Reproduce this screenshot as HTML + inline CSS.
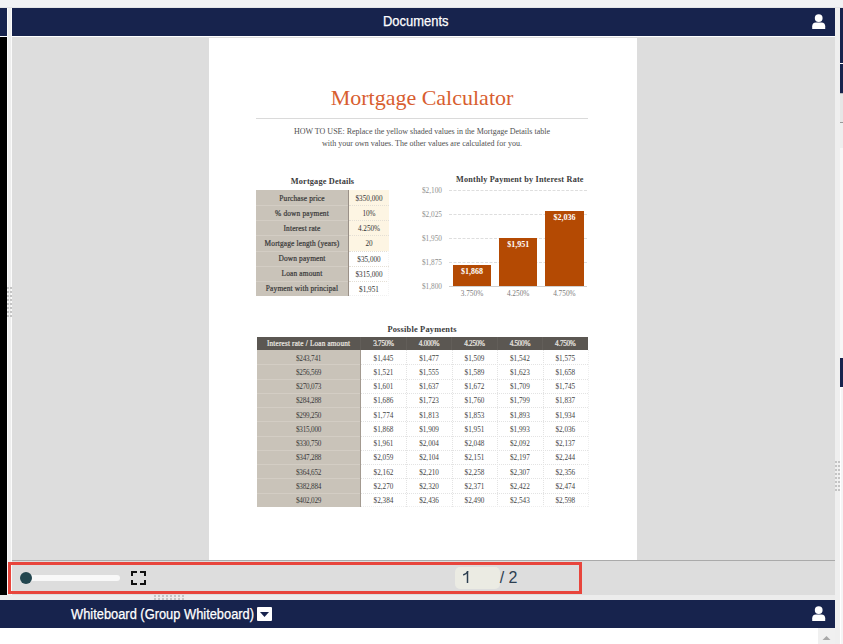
<!DOCTYPE html>
<html><head><meta charset="utf-8">
<style>
*{margin:0;padding:0;box-sizing:border-box}
html,body{width:843px;height:644px;overflow:hidden;background:#fff;font-family:"Liberation Sans",sans-serif}
.a{position:absolute}
.navy{background:#17234d}
.s{font-family:"Liberation Serif",serif;position:absolute;white-space:nowrap}
.c{text-align:center}
.r{text-align:right}
.b{font-weight:bold}
.m{-webkit-text-stroke:0.22px currentColor}
</style></head><body>

<div class="a" style="left:0;top:0;width:843px;height:8px;background:#f1f2f4"></div>
<div class="a" style="left:0;top:7px;width:843px;height:1px;background:#e4e5e7"></div>
<div class="a navy" style="left:0;top:8px;width:7px;height:28px"></div>
<div class="a" style="left:0;top:36px;width:7px;height:1px;background:#fff"></div>
<div class="a" style="left:0;top:37px;width:7px;height:558px;background:#000"></div>
<div class="a" style="left:7px;top:8px;width:5px;height:587px;background:#eeeeee;border-left:1px solid #fbfbfb;border-right:1px solid #fbfbfb"></div>
<svg class="a" style="left:7px;top:287px" width="5" height="32"><rect x="0" y="0" width="2" height="2" fill="#c4c4c4"/><rect x="3" y="0" width="2" height="2" fill="#c4c4c4"/><rect x="0" y="4" width="2" height="2" fill="#c4c4c4"/><rect x="3" y="4" width="2" height="2" fill="#c4c4c4"/><rect x="0" y="8" width="2" height="2" fill="#c4c4c4"/><rect x="3" y="8" width="2" height="2" fill="#c4c4c4"/><rect x="0" y="12" width="2" height="2" fill="#c4c4c4"/><rect x="3" y="12" width="2" height="2" fill="#c4c4c4"/><rect x="0" y="16" width="2" height="2" fill="#c4c4c4"/><rect x="3" y="16" width="2" height="2" fill="#c4c4c4"/><rect x="0" y="20" width="2" height="2" fill="#c4c4c4"/><rect x="3" y="20" width="2" height="2" fill="#c4c4c4"/><rect x="0" y="24" width="2" height="2" fill="#c4c4c4"/><rect x="3" y="24" width="2" height="2" fill="#c4c4c4"/><rect x="0" y="28" width="2" height="2" fill="#c4c4c4"/><rect x="3" y="28" width="2" height="2" fill="#c4c4c4"/></svg>
<div class="a" style="left:835px;top:8px;width:5px;height:636px;background:#efefef"></div>
<div class="a navy" style="left:840px;top:8px;width:3px;height:55px"></div>
<div class="a" style="left:840px;top:63px;width:3px;height:1px;background:#fff"></div>
<div class="a navy" style="left:840px;top:64px;width:3px;height:29px"></div>
<div class="a" style="left:840px;top:93px;width:3px;height:29px;background:#e6e6e6;border-top:1px solid #bbb"></div>
<div class="a" style="left:840px;top:122px;width:3px;height:26px;background:#eee;border-top:1px solid #999"></div>
<div class="a" style="left:840px;top:148px;width:3px;height:210px;background:#f7f7f7"></div>
<div class="a" style="left:840px;top:387px;width:3px;height:257px;background:#f5f5f5;border-left:1px solid #fff;border-top:1px solid #fff"></div>
<div class="a navy" style="left:840px;top:358px;width:3px;height:29px"></div>
<svg class="a" style="left:835px;top:461px" width="5" height="32"><rect x="0" y="0" width="2" height="2" fill="#c4c4c4"/><rect x="3" y="0" width="2" height="2" fill="#c4c4c4"/><rect x="0" y="4" width="2" height="2" fill="#c4c4c4"/><rect x="3" y="4" width="2" height="2" fill="#c4c4c4"/><rect x="0" y="8" width="2" height="2" fill="#c4c4c4"/><rect x="3" y="8" width="2" height="2" fill="#c4c4c4"/><rect x="0" y="12" width="2" height="2" fill="#c4c4c4"/><rect x="3" y="12" width="2" height="2" fill="#c4c4c4"/><rect x="0" y="16" width="2" height="2" fill="#c4c4c4"/><rect x="3" y="16" width="2" height="2" fill="#c4c4c4"/><rect x="0" y="20" width="2" height="2" fill="#c4c4c4"/><rect x="3" y="20" width="2" height="2" fill="#c4c4c4"/><rect x="0" y="24" width="2" height="2" fill="#c4c4c4"/><rect x="3" y="24" width="2" height="2" fill="#c4c4c4"/><rect x="0" y="28" width="2" height="2" fill="#c4c4c4"/><rect x="3" y="28" width="2" height="2" fill="#c4c4c4"/></svg>
<div class="a navy" style="left:12px;top:8px;width:823px;height:28px"></div>
<div class="a" style="left:383px;top:7px;height:28px;color:#fff;font-size:14px;line-height:28px;transform:scaleX(0.925);transform-origin:0 0;-webkit-text-stroke:0.25px #fff">Documents</div>
<div class="a" style="left:12px;top:36px;width:823px;height:1px;background:#fff"></div>
<svg class="a" style="left:810px;top:12px" width="18" height="20" viewBox="0 0 18 20">
<circle cx="8.7" cy="6.1" r="3.9" fill="#fff"/>
<path d="M2.2 17 V14.2 Q2.2 10.4 6 10.4 H11.4 Q15.2 10.4 15.2 14.2 V17 Z" fill="#fff"/></svg>
<div class="a" style="left:12px;top:37px;width:823px;height:523px;background:#dddddd"></div>
<div class="a" style="left:12px;top:560px;width:823px;height:1px;background:#aaaaaa"></div>
<div class="a" style="left:209px;top:38px;width:428px;height:522px;background:#fff"></div>
<div class="s c" style="left:256px;top:83px;width:332px;height:30px;line-height:30px;font-size:22px;color:#d85e30">Mortgage Calculator</div>
<div class="a" style="left:256px;top:118px;width:332px;height:1px;background:#dadada"></div>
<div class="s c" style="left:256px;top:126px;width:332px;line-height:11.5px;font-size:8px;color:#505050">HOW TO USE: Replace the yellow shaded values in the Mortgage Details table<br>with your own values. The other values are calculated for you.</div>
<div class="s c b" style="left:256px;top:176px;width:133px;line-height:12px;font-size:8.3px;letter-spacing:0.15px;color:#3c3c3c">Mortgage Details</div>
<div class="a" style="left:256px;top:190px;width:92px;height:106px;background:#c9c3b9"></div>
<div class="a" style="left:348px;top:190px;width:1px;height:106px;background:#9a9087"></div>
<div class="a" style="left:349px;top:190px;width:40px;height:60.57px;background:#fdf5e3"></div>
<div class="s c m" style="left:256px;top:190.50px;width:92px;height:15.14px;line-height:15.14px;font-size:7.4px;letter-spacing:0.15px;color:#3a3a3a">Purchase price</div>
<div class="s c" style="left:349px;top:192.00px;width:40px;height:15.14px;line-height:15.14px;font-size:7.2px;color:#333">$350,000</div>
<div class="a" style="left:256px;top:205.14px;width:92px;height:1px;background:#d3cdc4"></div>
<div class="a" style="left:349px;top:205.14px;width:40px;height:0;border-top:1px dotted #e4dfd5"></div>
<div class="s c m" style="left:256px;top:205.64px;width:92px;height:15.14px;line-height:15.14px;font-size:7.4px;letter-spacing:0.15px;color:#3a3a3a">% down payment</div>
<div class="s c" style="left:349px;top:207.14px;width:40px;height:15.14px;line-height:15.14px;font-size:7.2px;color:#333">10%</div>
<div class="a" style="left:256px;top:220.29px;width:92px;height:1px;background:#d3cdc4"></div>
<div class="a" style="left:349px;top:220.29px;width:40px;height:0;border-top:1px dotted #e4dfd5"></div>
<div class="s c m" style="left:256px;top:220.79px;width:92px;height:15.14px;line-height:15.14px;font-size:7.4px;letter-spacing:0.15px;color:#3a3a3a">Interest rate</div>
<div class="s c" style="left:349px;top:222.29px;width:40px;height:15.14px;line-height:15.14px;font-size:7.2px;color:#333">4.250%</div>
<div class="a" style="left:256px;top:235.43px;width:92px;height:1px;background:#d3cdc4"></div>
<div class="a" style="left:349px;top:235.43px;width:40px;height:0;border-top:1px dotted #e4dfd5"></div>
<div class="s c m" style="left:256px;top:235.93px;width:92px;height:15.14px;line-height:15.14px;font-size:7.4px;letter-spacing:0.15px;color:#3a3a3a">Mortgage length (years)</div>
<div class="s c" style="left:349px;top:237.43px;width:40px;height:15.14px;line-height:15.14px;font-size:7.2px;color:#333">20</div>
<div class="a" style="left:256px;top:250.57px;width:92px;height:1px;background:#d3cdc4"></div>
<div class="a" style="left:349px;top:250.57px;width:40px;height:0;border-top:1px dotted #e4dfd5"></div>
<div class="s c m" style="left:256px;top:251.07px;width:92px;height:15.14px;line-height:15.14px;font-size:7.4px;letter-spacing:0.15px;color:#3a3a3a">Down payment</div>
<div class="s c" style="left:349px;top:252.57px;width:40px;height:15.14px;line-height:15.14px;font-size:7.2px;color:#333">$35,000</div>
<div class="a" style="left:256px;top:265.71px;width:92px;height:1px;background:#d3cdc4"></div>
<div class="a" style="left:349px;top:265.71px;width:40px;height:0;border-top:1px dotted #e4dfd5"></div>
<div class="s c m" style="left:256px;top:266.21px;width:92px;height:15.14px;line-height:15.14px;font-size:7.4px;letter-spacing:0.15px;color:#3a3a3a">Loan amount</div>
<div class="s c" style="left:349px;top:267.71px;width:40px;height:15.14px;line-height:15.14px;font-size:7.2px;color:#333">$315,000</div>
<div class="a" style="left:256px;top:280.86px;width:92px;height:1px;background:#d3cdc4"></div>
<div class="a" style="left:349px;top:280.86px;width:40px;height:0;border-top:1px dotted #e4dfd5"></div>
<div class="s c m" style="left:256px;top:281.36px;width:92px;height:15.14px;line-height:15.14px;font-size:7.4px;letter-spacing:0.15px;color:#3a3a3a">Payment with principal</div>
<div class="s c" style="left:349px;top:282.86px;width:40px;height:15.14px;line-height:15.14px;font-size:7.2px;color:#333">$1,951</div>
<div class="a" style="left:349px;top:250.57px;width:40px;height:45.43px;border-right:1px dotted #f4f4f4;border-bottom:1px dotted #f0f0f0"></div>
<div class="s b" style="left:456px;top:173.5px;line-height:12px;font-size:8.2px;letter-spacing:0.2px;color:#3c3c3c">Monthly Payment by Interest Rate</div>
<div class="s r" style="left:402px;top:185.0px;width:40px;line-height:12px;font-size:7.3px;color:#8f8f8f">$2,100</div>
<svg class="a" style="left:449px;top:190px" width="138" height="1"><line x1="0" y1="0.5" x2="138" y2="0.5" stroke="#dedede" stroke-width="1" stroke-dasharray="3 1.5"/></svg>
<div class="s r" style="left:402px;top:209.0px;width:40px;line-height:12px;font-size:7.3px;color:#8f8f8f">$2,025</div>
<svg class="a" style="left:449px;top:214px" width="138" height="1"><line x1="0" y1="0.5" x2="138" y2="0.5" stroke="#dedede" stroke-width="1" stroke-dasharray="3 1.5"/></svg>
<div class="s r" style="left:402px;top:233.0px;width:40px;line-height:12px;font-size:7.3px;color:#8f8f8f">$1,950</div>
<svg class="a" style="left:449px;top:238px" width="138" height="1"><line x1="0" y1="0.5" x2="138" y2="0.5" stroke="#dedede" stroke-width="1" stroke-dasharray="3 1.5"/></svg>
<div class="s r" style="left:402px;top:257.0px;width:40px;line-height:12px;font-size:7.3px;color:#8f8f8f">$1,875</div>
<svg class="a" style="left:449px;top:262px" width="138" height="1"><line x1="0" y1="0.5" x2="138" y2="0.5" stroke="#dedede" stroke-width="1" stroke-dasharray="3 1.5"/></svg>
<div class="s r" style="left:402px;top:281.0px;width:40px;line-height:12px;font-size:7.3px;color:#8f8f8f">$1,800</div>
<div class="a" style="left:449px;top:286px;width:138px;height:1px;background:#d0d0d0"></div>
<div class="a" style="left:453px;top:265.4px;width:38px;height:21.0px;background:#b44a03"></div>
<div class="s c b" style="left:453px;top:266.1px;width:38px;line-height:12px;font-size:8px;color:#fff">$1,868</div>
<div class="s c" style="left:448px;top:288px;width:48px;line-height:12px;font-size:7.3px;color:#7c7c7c">3.750%</div>
<div class="a" style="left:499px;top:238.2px;width:38.3px;height:48.2px;background:#b44a03"></div>
<div class="s c b" style="left:499px;top:238.9px;width:38.3px;line-height:12px;font-size:8px;color:#fff">$1,951</div>
<div class="s c" style="left:494px;top:288px;width:48.3px;line-height:12px;font-size:7.3px;color:#7c7c7c">4.250%</div>
<div class="a" style="left:545px;top:211.0px;width:38.8px;height:75.4px;background:#b44a03"></div>
<div class="s c b" style="left:545px;top:211.7px;width:38.8px;line-height:12px;font-size:8px;color:#fff">$2,036</div>
<div class="s c" style="left:540px;top:288px;width:48.8px;line-height:12px;font-size:7.3px;color:#7c7c7c">4.750%</div>
<div class="s c b" style="left:256px;top:324px;width:332px;line-height:12px;font-size:8.4px;letter-spacing:0.2px;color:#3c3c3c">Possible Payments</div>
<div class="a" style="left:256.5px;top:337px;width:331.5px;height:13px;background:#5b5752"></div>
<div class="s c m" style="left:256.5px;top:337.5px;width:104.2px;height:13px;line-height:13px;font-size:7.2px;letter-spacing:0.2px;color:#ebe8e2">Interest rate / Loan amount</div>
<div class="s c m" style="left:360.7px;top:337.5px;width:45.6px;height:13px;line-height:13px;font-size:7.2px;letter-spacing:-0.3px;color:#ebe8e2">3.750%</div>
<div class="a" style="left:360.2px;top:337px;width:1px;height:13px;background:#625e59"></div>
<div class="s c m" style="left:406.3px;top:337.5px;width:45.5px;height:13px;line-height:13px;font-size:7.2px;letter-spacing:-0.3px;color:#ebe8e2">4.000%</div>
<div class="a" style="left:405.8px;top:337px;width:1px;height:13px;background:#625e59"></div>
<div class="s c m" style="left:451.8px;top:337.5px;width:45.4px;height:13px;line-height:13px;font-size:7.2px;letter-spacing:-0.3px;color:#ebe8e2">4.250%</div>
<div class="a" style="left:451.3px;top:337px;width:1px;height:13px;background:#625e59"></div>
<div class="s c m" style="left:497.2px;top:337.5px;width:45.4px;height:13px;line-height:13px;font-size:7.2px;letter-spacing:-0.3px;color:#ebe8e2">4.500%</div>
<div class="a" style="left:496.7px;top:337px;width:1px;height:13px;background:#625e59"></div>
<div class="s c m" style="left:542.6px;top:337.5px;width:45.4px;height:13px;line-height:13px;font-size:7.2px;letter-spacing:-0.3px;color:#ebe8e2">4.750%</div>
<div class="a" style="left:542.1px;top:337px;width:1px;height:13px;background:#625e59"></div>
<div class="a" style="left:256.5px;top:350px;width:103.5px;height:157px;background:#c9c3b9"></div>
<div class="a" style="left:360px;top:350px;width:1px;height:157px;background:#a39a90"></div>
<div class="a" style="left:406.3px;top:350px;width:0;height:157px;border-left:1px dotted #e3e3e3"></div>
<div class="a" style="left:451.8px;top:350px;width:0;height:157px;border-left:1px dotted #e3e3e3"></div>
<div class="a" style="left:497.2px;top:350px;width:0;height:157px;border-left:1px dotted #e3e3e3"></div>
<div class="a" style="left:542.6px;top:350px;width:0;height:157px;border-left:1px dotted #e3e3e3"></div>
<div class="a" style="left:587.5px;top:350px;width:0;height:157px;border-left:1px dotted #eee"></div>
<div class="s c" style="left:256.5px;top:351.50px;width:104.2px;height:14.27px;line-height:14.27px;font-size:7.2px;color:#3a3a3a;letter-spacing:-0.2px">$243,741</div>
<div class="s c" style="left:360.7px;top:351.50px;width:45.6px;height:14.27px;line-height:14.27px;font-size:7.2px;color:#444">$1,445</div>
<div class="s c" style="left:406.3px;top:351.50px;width:45.5px;height:14.27px;line-height:14.27px;font-size:7.2px;color:#444">$1,477</div>
<div class="s c" style="left:451.8px;top:351.50px;width:45.4px;height:14.27px;line-height:14.27px;font-size:7.2px;color:#444">$1,509</div>
<div class="s c" style="left:497.2px;top:351.50px;width:45.4px;height:14.27px;line-height:14.27px;font-size:7.2px;color:#444">$1,542</div>
<div class="s c" style="left:542.6px;top:351.50px;width:45.4px;height:14.27px;line-height:14.27px;font-size:7.2px;color:#444">$1,575</div>
<div class="a" style="left:256.5px;top:364.27px;width:103.5px;height:1px;background:#d3cdc4"></div>
<div class="a" style="left:361px;top:364.27px;width:227px;height:0;border-top:1px dotted #e3e3e3"></div>
<div class="s c" style="left:256.5px;top:365.77px;width:104.2px;height:14.27px;line-height:14.27px;font-size:7.2px;color:#3a3a3a;letter-spacing:-0.2px">$256,569</div>
<div class="s c" style="left:360.7px;top:365.77px;width:45.6px;height:14.27px;line-height:14.27px;font-size:7.2px;color:#444">$1,521</div>
<div class="s c" style="left:406.3px;top:365.77px;width:45.5px;height:14.27px;line-height:14.27px;font-size:7.2px;color:#444">$1,555</div>
<div class="s c" style="left:451.8px;top:365.77px;width:45.4px;height:14.27px;line-height:14.27px;font-size:7.2px;color:#444">$1,589</div>
<div class="s c" style="left:497.2px;top:365.77px;width:45.4px;height:14.27px;line-height:14.27px;font-size:7.2px;color:#444">$1,623</div>
<div class="s c" style="left:542.6px;top:365.77px;width:45.4px;height:14.27px;line-height:14.27px;font-size:7.2px;color:#444">$1,658</div>
<div class="a" style="left:256.5px;top:378.55px;width:103.5px;height:1px;background:#d3cdc4"></div>
<div class="a" style="left:361px;top:378.55px;width:227px;height:0;border-top:1px dotted #e3e3e3"></div>
<div class="s c" style="left:256.5px;top:380.05px;width:104.2px;height:14.27px;line-height:14.27px;font-size:7.2px;color:#3a3a3a;letter-spacing:-0.2px">$270,073</div>
<div class="s c" style="left:360.7px;top:380.05px;width:45.6px;height:14.27px;line-height:14.27px;font-size:7.2px;color:#444">$1,601</div>
<div class="s c" style="left:406.3px;top:380.05px;width:45.5px;height:14.27px;line-height:14.27px;font-size:7.2px;color:#444">$1,637</div>
<div class="s c" style="left:451.8px;top:380.05px;width:45.4px;height:14.27px;line-height:14.27px;font-size:7.2px;color:#444">$1,672</div>
<div class="s c" style="left:497.2px;top:380.05px;width:45.4px;height:14.27px;line-height:14.27px;font-size:7.2px;color:#444">$1,709</div>
<div class="s c" style="left:542.6px;top:380.05px;width:45.4px;height:14.27px;line-height:14.27px;font-size:7.2px;color:#444">$1,745</div>
<div class="a" style="left:256.5px;top:392.82px;width:103.5px;height:1px;background:#d3cdc4"></div>
<div class="a" style="left:361px;top:392.82px;width:227px;height:0;border-top:1px dotted #e3e3e3"></div>
<div class="s c" style="left:256.5px;top:394.32px;width:104.2px;height:14.27px;line-height:14.27px;font-size:7.2px;color:#3a3a3a;letter-spacing:-0.2px">$284,288</div>
<div class="s c" style="left:360.7px;top:394.32px;width:45.6px;height:14.27px;line-height:14.27px;font-size:7.2px;color:#444">$1,686</div>
<div class="s c" style="left:406.3px;top:394.32px;width:45.5px;height:14.27px;line-height:14.27px;font-size:7.2px;color:#444">$1,723</div>
<div class="s c" style="left:451.8px;top:394.32px;width:45.4px;height:14.27px;line-height:14.27px;font-size:7.2px;color:#444">$1,760</div>
<div class="s c" style="left:497.2px;top:394.32px;width:45.4px;height:14.27px;line-height:14.27px;font-size:7.2px;color:#444">$1,799</div>
<div class="s c" style="left:542.6px;top:394.32px;width:45.4px;height:14.27px;line-height:14.27px;font-size:7.2px;color:#444">$1,837</div>
<div class="a" style="left:256.5px;top:407.09px;width:103.5px;height:1px;background:#d3cdc4"></div>
<div class="a" style="left:361px;top:407.09px;width:227px;height:0;border-top:1px dotted #e3e3e3"></div>
<div class="s c" style="left:256.5px;top:408.59px;width:104.2px;height:14.27px;line-height:14.27px;font-size:7.2px;color:#3a3a3a;letter-spacing:-0.2px">$299,250</div>
<div class="s c" style="left:360.7px;top:408.59px;width:45.6px;height:14.27px;line-height:14.27px;font-size:7.2px;color:#444">$1,774</div>
<div class="s c" style="left:406.3px;top:408.59px;width:45.5px;height:14.27px;line-height:14.27px;font-size:7.2px;color:#444">$1,813</div>
<div class="s c" style="left:451.8px;top:408.59px;width:45.4px;height:14.27px;line-height:14.27px;font-size:7.2px;color:#444">$1,853</div>
<div class="s c" style="left:497.2px;top:408.59px;width:45.4px;height:14.27px;line-height:14.27px;font-size:7.2px;color:#444">$1,893</div>
<div class="s c" style="left:542.6px;top:408.59px;width:45.4px;height:14.27px;line-height:14.27px;font-size:7.2px;color:#444">$1,934</div>
<div class="a" style="left:256.5px;top:421.36px;width:103.5px;height:1px;background:#d3cdc4"></div>
<div class="a" style="left:361px;top:421.36px;width:227px;height:0;border-top:1px dotted #e3e3e3"></div>
<div class="s c" style="left:256.5px;top:422.86px;width:104.2px;height:14.27px;line-height:14.27px;font-size:7.2px;color:#3a3a3a;letter-spacing:-0.2px">$315,000</div>
<div class="s c" style="left:360.7px;top:422.86px;width:45.6px;height:14.27px;line-height:14.27px;font-size:7.2px;color:#444">$1,868</div>
<div class="s c" style="left:406.3px;top:422.86px;width:45.5px;height:14.27px;line-height:14.27px;font-size:7.2px;color:#444">$1,909</div>
<div class="s c" style="left:451.8px;top:422.86px;width:45.4px;height:14.27px;line-height:14.27px;font-size:7.2px;color:#444">$1,951</div>
<div class="s c" style="left:497.2px;top:422.86px;width:45.4px;height:14.27px;line-height:14.27px;font-size:7.2px;color:#444">$1,993</div>
<div class="s c" style="left:542.6px;top:422.86px;width:45.4px;height:14.27px;line-height:14.27px;font-size:7.2px;color:#444">$2,036</div>
<div class="a" style="left:256.5px;top:435.64px;width:103.5px;height:1px;background:#d3cdc4"></div>
<div class="a" style="left:361px;top:435.64px;width:227px;height:0;border-top:1px dotted #e3e3e3"></div>
<div class="s c" style="left:256.5px;top:437.14px;width:104.2px;height:14.27px;line-height:14.27px;font-size:7.2px;color:#3a3a3a;letter-spacing:-0.2px">$330,750</div>
<div class="s c" style="left:360.7px;top:437.14px;width:45.6px;height:14.27px;line-height:14.27px;font-size:7.2px;color:#444">$1,961</div>
<div class="s c" style="left:406.3px;top:437.14px;width:45.5px;height:14.27px;line-height:14.27px;font-size:7.2px;color:#444">$2,004</div>
<div class="s c" style="left:451.8px;top:437.14px;width:45.4px;height:14.27px;line-height:14.27px;font-size:7.2px;color:#444">$2,048</div>
<div class="s c" style="left:497.2px;top:437.14px;width:45.4px;height:14.27px;line-height:14.27px;font-size:7.2px;color:#444">$2,092</div>
<div class="s c" style="left:542.6px;top:437.14px;width:45.4px;height:14.27px;line-height:14.27px;font-size:7.2px;color:#444">$2,137</div>
<div class="a" style="left:256.5px;top:449.91px;width:103.5px;height:1px;background:#d3cdc4"></div>
<div class="a" style="left:361px;top:449.91px;width:227px;height:0;border-top:1px dotted #e3e3e3"></div>
<div class="s c" style="left:256.5px;top:451.41px;width:104.2px;height:14.27px;line-height:14.27px;font-size:7.2px;color:#3a3a3a;letter-spacing:-0.2px">$347,288</div>
<div class="s c" style="left:360.7px;top:451.41px;width:45.6px;height:14.27px;line-height:14.27px;font-size:7.2px;color:#444">$2,059</div>
<div class="s c" style="left:406.3px;top:451.41px;width:45.5px;height:14.27px;line-height:14.27px;font-size:7.2px;color:#444">$2,104</div>
<div class="s c" style="left:451.8px;top:451.41px;width:45.4px;height:14.27px;line-height:14.27px;font-size:7.2px;color:#444">$2,151</div>
<div class="s c" style="left:497.2px;top:451.41px;width:45.4px;height:14.27px;line-height:14.27px;font-size:7.2px;color:#444">$2,197</div>
<div class="s c" style="left:542.6px;top:451.41px;width:45.4px;height:14.27px;line-height:14.27px;font-size:7.2px;color:#444">$2,244</div>
<div class="a" style="left:256.5px;top:464.18px;width:103.5px;height:1px;background:#d3cdc4"></div>
<div class="a" style="left:361px;top:464.18px;width:227px;height:0;border-top:1px dotted #e3e3e3"></div>
<div class="s c" style="left:256.5px;top:465.68px;width:104.2px;height:14.27px;line-height:14.27px;font-size:7.2px;color:#3a3a3a;letter-spacing:-0.2px">$364,652</div>
<div class="s c" style="left:360.7px;top:465.68px;width:45.6px;height:14.27px;line-height:14.27px;font-size:7.2px;color:#444">$2,162</div>
<div class="s c" style="left:406.3px;top:465.68px;width:45.5px;height:14.27px;line-height:14.27px;font-size:7.2px;color:#444">$2,210</div>
<div class="s c" style="left:451.8px;top:465.68px;width:45.4px;height:14.27px;line-height:14.27px;font-size:7.2px;color:#444">$2,258</div>
<div class="s c" style="left:497.2px;top:465.68px;width:45.4px;height:14.27px;line-height:14.27px;font-size:7.2px;color:#444">$2,307</div>
<div class="s c" style="left:542.6px;top:465.68px;width:45.4px;height:14.27px;line-height:14.27px;font-size:7.2px;color:#444">$2,356</div>
<div class="a" style="left:256.5px;top:478.45px;width:103.5px;height:1px;background:#d3cdc4"></div>
<div class="a" style="left:361px;top:478.45px;width:227px;height:0;border-top:1px dotted #e3e3e3"></div>
<div class="s c" style="left:256.5px;top:479.95px;width:104.2px;height:14.27px;line-height:14.27px;font-size:7.2px;color:#3a3a3a;letter-spacing:-0.2px">$382,884</div>
<div class="s c" style="left:360.7px;top:479.95px;width:45.6px;height:14.27px;line-height:14.27px;font-size:7.2px;color:#444">$2,270</div>
<div class="s c" style="left:406.3px;top:479.95px;width:45.5px;height:14.27px;line-height:14.27px;font-size:7.2px;color:#444">$2,320</div>
<div class="s c" style="left:451.8px;top:479.95px;width:45.4px;height:14.27px;line-height:14.27px;font-size:7.2px;color:#444">$2,371</div>
<div class="s c" style="left:497.2px;top:479.95px;width:45.4px;height:14.27px;line-height:14.27px;font-size:7.2px;color:#444">$2,422</div>
<div class="s c" style="left:542.6px;top:479.95px;width:45.4px;height:14.27px;line-height:14.27px;font-size:7.2px;color:#444">$2,474</div>
<div class="a" style="left:256.5px;top:492.73px;width:103.5px;height:1px;background:#d3cdc4"></div>
<div class="a" style="left:361px;top:492.73px;width:227px;height:0;border-top:1px dotted #e3e3e3"></div>
<div class="s c" style="left:256.5px;top:494.23px;width:104.2px;height:14.27px;line-height:14.27px;font-size:7.2px;color:#3a3a3a;letter-spacing:-0.2px">$402,029</div>
<div class="s c" style="left:360.7px;top:494.23px;width:45.6px;height:14.27px;line-height:14.27px;font-size:7.2px;color:#444">$2,384</div>
<div class="s c" style="left:406.3px;top:494.23px;width:45.5px;height:14.27px;line-height:14.27px;font-size:7.2px;color:#444">$2,436</div>
<div class="s c" style="left:451.8px;top:494.23px;width:45.4px;height:14.27px;line-height:14.27px;font-size:7.2px;color:#444">$2,490</div>
<div class="s c" style="left:497.2px;top:494.23px;width:45.4px;height:14.27px;line-height:14.27px;font-size:7.2px;color:#444">$2,543</div>
<div class="s c" style="left:542.6px;top:494.23px;width:45.4px;height:14.27px;line-height:14.27px;font-size:7.2px;color:#444">$2,598</div>
<div class="a" style="left:361px;top:506px;width:227px;height:0;border-top:1px dotted #eee"></div>
<div class="a" style="left:12px;top:561px;width:823px;height:34px;background:#dddddd"></div>
<div class="a" style="left:8px;top:562px;width:574px;height:32px;border:3px solid #e8453c"></div>
<div class="a" style="left:26px;top:575px;width:94px;height:6px;border-radius:3px;background:#f8f8f8"></div>
<div class="a" style="left:20px;top:572px;width:12px;height:12px;border-radius:50%;background:#23464f"></div>
<svg class="a" style="left:131px;top:571px" width="15" height="14" viewBox="0 0 15 14">
<path d="M1 5V1H6 M9 1H14V5 M14 9V13H9 M6 13H1V9" fill="none" stroke="#111" stroke-width="2"/></svg>
<div class="a" style="left:455px;top:567px;width:45px;height:22px;border-radius:5px;background:#ebebe3"></div>
<svg class="a" style="left:460px;top:568px" width="12" height="18"><path d="M7.5 3V15" stroke="#2c3e50" stroke-width="1.5" fill="none"/><path d="M8 3.3C7 5 5.2 6.3 3.2 7" stroke="#2c3e50" stroke-width="1.35" fill="none"/></svg>
<div class="a" style="left:499.7px;top:567px;height:22px;line-height:22px;font-size:16px;color:#2c3e50">/ 2</div>
<div class="a" style="left:0;top:595px;width:835px;height:5px;background:#ececec"></div>
<svg class="a" style="left:154px;top:595px" width="32" height="5"><rect x="0" y="0" width="2" height="2" fill="#c4c4c4"/><rect x="0" y="3" width="2" height="2" fill="#c4c4c4"/><rect x="4" y="0" width="2" height="2" fill="#c4c4c4"/><rect x="4" y="3" width="2" height="2" fill="#c4c4c4"/><rect x="8" y="0" width="2" height="2" fill="#c4c4c4"/><rect x="8" y="3" width="2" height="2" fill="#c4c4c4"/><rect x="12" y="0" width="2" height="2" fill="#c4c4c4"/><rect x="12" y="3" width="2" height="2" fill="#c4c4c4"/><rect x="16" y="0" width="2" height="2" fill="#c4c4c4"/><rect x="16" y="3" width="2" height="2" fill="#c4c4c4"/><rect x="20" y="0" width="2" height="2" fill="#c4c4c4"/><rect x="20" y="3" width="2" height="2" fill="#c4c4c4"/><rect x="24" y="0" width="2" height="2" fill="#c4c4c4"/><rect x="24" y="3" width="2" height="2" fill="#c4c4c4"/><rect x="28" y="0" width="2" height="2" fill="#c4c4c4"/><rect x="28" y="3" width="2" height="2" fill="#c4c4c4"/></svg>
<div class="a navy" style="left:0;top:600px;width:835px;height:28px"></div>
<div class="a" style="left:71px;top:600px;height:28px;line-height:28px;color:#fff;font-size:14px;transform:scaleX(0.919);transform-origin:0 0;-webkit-text-stroke:0.25px #fff">Whiteboard (Group Whiteboard)</div>
<div class="a" style="left:257px;top:607px;width:15px;height:14px;background:#fff;border-radius:1px"></div>
<svg class="a" style="left:257px;top:607px" width="15" height="14"><path d="M3 5H12L7.5 10Z" fill="#17234d"/></svg>
<svg class="a" style="left:810px;top:604px" width="18" height="20" viewBox="0 0 18 20">
<circle cx="8.7" cy="6.1" r="3.9" fill="#fff"/>
<path d="M2.2 17 V14.2 Q2.2 10.4 6 10.4 H11.4 Q15.2 10.4 15.2 14.2 V17 Z" fill="#fff"/></svg>
<div class="a" style="left:818px;top:628px;width:17px;height:16px;background:#f0f0f0"></div>
<svg class="a" style="left:818px;top:628px" width="17" height="16"><path d="M4.5 12H12.5L8.5 8Z" fill="#a8a8a8"/></svg>
</body></html>
